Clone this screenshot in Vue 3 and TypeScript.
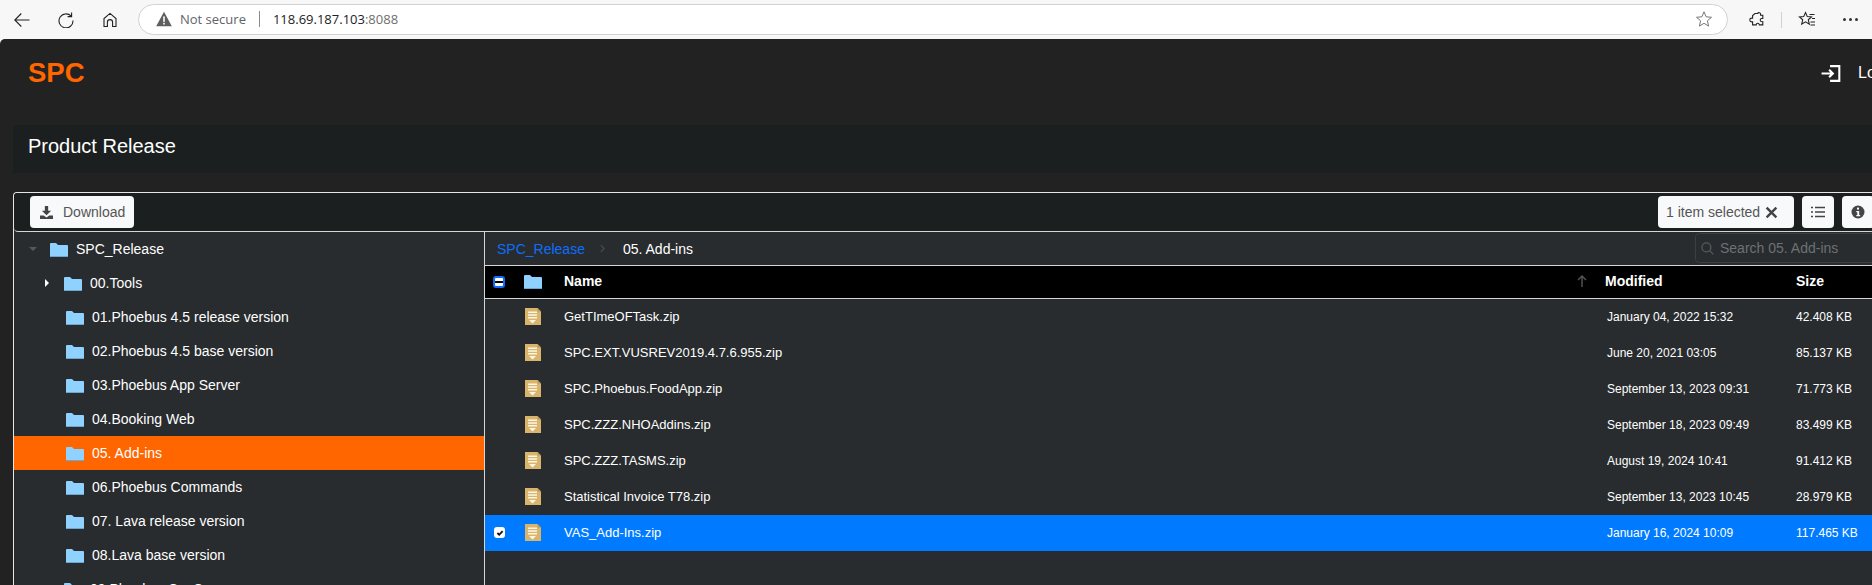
<script setup lang="ts">
interface FileRow { name: string; modified: string; size: string; selected?: boolean }
interface FolderRow { name: string; kind: 'root' | 'closed' | 'leaf'; active?: boolean }

const folders: FolderRow[] = [
  { name: 'SPC_Release', kind: 'root' },
  { name: '00.Tools', kind: 'closed' },
  { name: '01.Phoebus 4.5 release version', kind: 'leaf' },
  { name: '02.Phoebus 4.5 base version', kind: 'leaf' },
  { name: '03.Phoebus App Server', kind: 'leaf' },
  { name: '04.Booking Web', kind: 'leaf' },
  { name: '05. Add-ins', kind: 'leaf', active: true },
  { name: '06.Phoebus Commands', kind: 'leaf' },
  { name: '07. Lava release version', kind: 'leaf' },
  { name: '08.Lava base version', kind: 'leaf' },
  { name: '09.Phoebus Svr Svc', kind: 'closed' },
]

const files: FileRow[] = [
  { name: 'GetTImeOFTask.zip', modified: 'January 04, 2022 15:32', size: '42.408 KB' },
  { name: 'SPC.EXT.VUSREV2019.4.7.6.955.zip', modified: 'June 20, 2021 03:05', size: '85.137 KB' },
  { name: 'SPC.Phoebus.FoodApp.zip', modified: 'September 13, 2023 09:31', size: '71.773 KB' },
  { name: 'SPC.ZZZ.NHOAddins.zip', modified: 'September 18, 2023 09:49', size: '83.499 KB' },
  { name: 'SPC.ZZZ.TASMS.zip', modified: 'August 19, 2024 10:41', size: '91.412 KB' },
  { name: 'Statistical Invoice T78.zip', modified: 'September 13, 2023 10:45', size: '28.979 KB' },
  { name: 'VAS_Add-Ins.zip', modified: 'January 16, 2024 10:09', size: '117.465 KB', selected: true },
]
</script>

<template>
  <div class="screen">
    <div class="chrome">
      <svg class="nav back" viewBox="0 0 16 16"><path d="M15.5 8H.8M7.3 1.5.8 8l6.5 6.5" /></svg>
      <svg class="nav reload" viewBox="0 0 16 16"><path d="M13.2 4.2A7 7 0 1 0 15 8.5M13.6.6v4H9.6" /></svg>
      <svg class="nav home" viewBox="0 0 16 16"><path d="M2 14.5V6.6L8 1.4l6 5.2v7.9h-3.4V10.2a2.6 2.6 0 0 0-5.2 0v4.3Z" /></svg>
      <div class="address">
        <svg class="warn" viewBox="0 0 16 16"><path d="M8 .8 15.8 15.2H.2Z" fill="#5f5f5f" /><rect x="7.2" y="5.4" width="1.6" height="5.4" fill="#fff" /><rect x="7.2" y="11.8" width="1.6" height="1.7" fill="#fff" /></svg>
        <span class="secure">Not secure</span>
        <span class="divider"></span>
        <span class="host">118.69.187.103</span><span class="port">:8088</span>
        <svg class="star" viewBox="0 0 16 16"><path d="m8 .8 2.1 5 5.4.5-4.1 3.5 1.2 5.3L8 12.3l-4.6 2.8 1.2-5.3L.5 6.3l5.4-.5Z" /></svg>
      </div>
      <svg class="tool puzzle" viewBox="0 0 16 16"><path d="M6 1.5h2.6a1.6 1.6 0 0 1 3 .9v.9h2.2v3.2h-1a1.6 1.6 0 0 0 0 3.2h1v3.2h-3.4a1.6 1.6 0 0 0-3.2 0H3.6v-3h-.9a1.9 1.9 0 0 1 0-3.8h.9V3.6Z" /></svg>
      <span class="tool-divider"></span>
      <svg class="tool favs" viewBox="0 0 18 18"><path d="M7.5 1.5 9.3 5.6l4.2.4-3.2 2.8 1 4.3-3.8-2.3-3.8 2.3 1-4.3L1.5 6l4.2-.4ZM11.5 3.5h5M14 7.5h3M12.5 11h4.5M12.5 14h4.5" /></svg>
      <span class="more"><i></i><i></i><i></i></span>
    </div>

    <div class="page">
      <header class="brand-bar">
        <span class="brand">SPC</span>
        <span class="login">
          <svg class="login-icon" viewBox="0 0 20 18"><path d="M0 9h12M8 5l4 4-4 4M9 1.2h9.8v15.6H9" /></svg>
          Logout
        </span>
      </header>

      <div class="title-bar">Product Release</div>

      <section class="manager">
        <div class="toolbar">
          <button class="btn download">
            <svg class="btn-icon" viewBox="0 0 14 14"><path d="M5.2 0h3.6v5.2H12L7 10 2 5.2h3.2Z" /><path d="M0 10.2h4l3 2.3 3-2.3h4V14H0Z" /></svg>
            Download
          </button>
          <div class="toolbar-right">
            <button class="btn selected-count">
              1 item selected
              <svg class="close" viewBox="0 0 12 12"><path d="M1.5 1.5l9 9M10.5 1.5l-9 9" /></svg>
            </button>
            <button class="btn square">
              <svg class="list" viewBox="0 0 14 12"><path d="M4 1.5h10M4 6h10M4 10.5h10M0 1.5h2M0 6h2M0 10.5h2" /></svg>
            </button>
            <button class="btn square">
              <svg class="info" viewBox="0 0 14 14"><circle cx="7" cy="7" r="6.5" fill="#444" /><rect x="6" y="2.6" width="2" height="2" fill="#f8f9fa" /><path d="M5.3 6h2.9v4h1v1.3H5.3V10h1V7.2h-1Z" fill="#f8f9fa" /></svg>
            </button>
          </div>
        </div>

        <div class="body">
          <aside class="tree">
            <div
              v-for="f in folders"
              :key="f.name"
              class="tree-row"
              :class="[f.kind, { active: f.active }]"
            >
              <span class="caret" aria-hidden="true"></span>
              <svg class="folder" viewBox="0 0 18 14"><path d="M0 1a1 1 0 0 1 1-1h5l2 2h9a1 1 0 0 1 1 1v10a1 1 0 0 1-1 1H1a1 1 0 0 1-1-1Z" fill="#90d2ff" /><path d="M0 13h18v1H0Z" fill="#6ea6cf" /></svg>
              <span class="tree-label">{{ f.name }}</span>
            </div>
          </aside>

          <main class="pane">
            <div class="crumbs">
              <span class="crumb-link">SPC_Release</span>
              <svg class="crumb-sep" viewBox="0 0 6 10"><path d="m1 1 4 4-4 4" /></svg>
              <span class="crumb-current">05. Add-ins</span>
              <div class="search">
                <svg class="search-icon" viewBox="0 0 14 14"><circle cx="5.8" cy="5.8" r="4.8" /><path d="m9.3 9.3 4 4" /></svg>
                <span class="search-text">Search 05. Add-ins</span>
              </div>
            </div>

            <div class="grid-row head">
              <span class="check minus"><i></i></span>
              <svg class="folder" viewBox="0 0 18 14"><path d="M0 1a1 1 0 0 1 1-1h5l2 2h9a1 1 0 0 1 1 1v10a1 1 0 0 1-1 1H1a1 1 0 0 1-1-1Z" fill="#90d2ff" /><path d="M0 13h18v1H0Z" fill="#6ea6cf" /></svg>
              <span class="col-name head-text">
                Name
                <svg class="sort" viewBox="0 0 10 12"><path d="M5 12V1M1 5l4-4 4 4" /></svg>
              </span>
              <span class="head-text">Modified</span>
              <span class="head-text">Size</span>
            </div>

            <div
              v-for="file in files"
              :key="file.name"
              class="grid-row file"
              :class="{ selected: file.selected }"
            >
              <span v-if="file.selected" class="check on">
                <svg viewBox="0 0 10 10"><path d="m2.4 5 1.8 1.8L7.6 3.2" /></svg>
              </span>
              <span v-else></span>
              <svg class="zip" viewBox="0 0 16 17">
                <path d="M0 0h12.5L16 3.5V17H0Z" fill="#d9b46c" />
                <path d="M12.5 0 16 3.5h-3.5Z" fill="#b9975a" />
                <path d="M3 3.4h9v1.5H3ZM3 6.2h9v1.5H3ZM3 9h9v1.5H3Z" fill="#fdf6e3" />
                <path d="M4 12h7l-3.5 3.6Z" fill="#fdf6e3" />
              </svg>
              <span class="col-name file-name">{{ file.name }}</span>
              <span class="file-date">{{ file.modified }}</span>
              <span class="file-size">{{ file.size }}</span>
            </div>
          </main>
        </div>
      </section>
    </div>
  </div>
</template>

<style>
html, body { margin: 0; background: #f7f7f7; overflow: hidden; }
</style>

<style scoped>
.screen {
  width: 1872px;
  height: 585px;
  overflow: hidden;
  font-family: "Liberation Sans", Arial, sans-serif;
  background: #f7f7f7;
}
.chrome {
  height: 39px;
  display: flex;
  align-items: center;
  box-sizing: border-box;
  padding: 0 0 0 14px;
  color: #222;
}
.nav { width: 16px; height: 16px; fill: none; stroke: #222; stroke-width: 1.1; flex: none; }
.reload { margin-left: 28px; }
.home { margin-left: 28px; }
.address {
  margin-left: 20px;
  margin-top: -1px;
  flex: none;
  width: 1590px;
  height: 31px;
  box-sizing: border-box;
  border: 1px solid #d2d2d2;
  border-radius: 16px;
  background: #fff;
  display: flex;
  align-items: center;
  padding-left: 17px;
  font-size: 13px;
  font-family: "Open Sans", "Liberation Sans", sans-serif;
}
.warn { width: 16px; height: 16px; flex: none; }
.secure { margin-left: 8px; color: #5f6368; }
.divider { width: 1px; height: 16px; background: #8a8a8a; margin: 0 13px; }
.host { color: #222; }
.port { color: #6f6f6f; }
.star { width: 16px; height: 16px; margin-left: auto; margin-right: 15px; fill: #fff; stroke: #777; stroke-width: 1; flex: none; }
.tool { fill: none; stroke: #222; stroke-width: 1.1; flex: none; }
.puzzle { width: 16px; height: 16px; margin-left: 21px; }
.tool-divider { width: 1px; height: 16px; background: #d0d0d0; margin: 0 16px; }
.favs { width: 18px; height: 18px; }
.more { display: flex; gap: 3px; margin-left: 27px; }
.more i { width: 3px; height: 3px; background: #333; border-radius: 50%; }

.page {
  height: 546px;
  background: #222;
  border-top-left-radius: 5px;
  overflow: hidden;
  color: #fff;
}
.brand-bar {
  height: 86px;
  display: flex;
  align-items: center;
  justify-content: space-between;
  padding: 0 0 18px 28px;
  box-sizing: border-box;
  width: 1930px;
}
.brand { color: #f60; font-weight: 700; font-size: 27.5px; }
.login { display: flex; align-items: center; gap: 17px; font-size: 16px; width: 109px; flex: none; }
.login-icon { width: 20px; height: 17px; fill: none; stroke: #fff; stroke-width: 2.2; flex: none; }
.title-bar {
  margin-left: 13px;
  height: 48px;
  width: 1900px;
  box-sizing: border-box;
  background: #1c1f20;
  display: flex;
  align-items: center;
  padding: 0 0 6px 15px;
  font-size: 20px;
}

.manager {
  margin: 19px 0 0 13px;
  width: 1875px;
  box-sizing: border-box;
  border: 1px solid #e6e6e6;
  border-bottom: 0;
  border-radius: 4px 0 0 0;
}
.toolbar {
  height: 39px;
  box-sizing: border-box;
  border-bottom: 1px solid #d6d6d6;
  background: #1c1f20;
  border-radius: 4px 0 0 4px;
  display: flex;
  align-items: flex-start;
  justify-content: space-between;
  padding: 3px 13px 0 16px;
}
.toolbar-right { display: flex; gap: 8px; }
.btn {
  height: 32px;
  box-sizing: border-box;
  border: 0;
  border-radius: 4px;
  background: #f8f9fa;
  color: #555;
  font: 14px "Liberation Sans", Arial, sans-serif;
  display: flex;
  align-items: center;
  padding: 0 8px 0 10px;
}
.download { width: 104px; }
.btn-icon { width: 13px; height: 13px; fill: #444; margin-right: 10px; flex: none; }
.selected-count { width: 136px; padding: 0 7px 0 8px; justify-content: space-between; }
.close { width: 13px; height: 13px; fill: none; stroke: #444; stroke-width: 2.2; flex: none; margin-right: 9px; }
.square { width: 32px; padding: 0; justify-content: center; }
.list { width: 14px; height: 12px; fill: none; stroke: #444; stroke-width: 1.7; }
.info { width: 14px; height: 14px; }

.body { display: flex; background: #282c2e; height: 360px; }
.tree {
  width: 470px;
  flex: none;
  border-right: 1px solid #d6d6d6;
  font-size: 14px;
}
.tree-row {
  height: 34px;
  display: flex;
  align-items: center;
  position: relative;
}
.tree-row.active { background: #f60; }
.folder { width: 18px; height: 14px; flex: none; }
.tree-row .folder { margin-top: 2px; }
.caret { width: 0; height: 0; flex: none; }
.tree-row.root { padding-left: 36px; }
.tree-row.root .caret {
  position: absolute;
  left: 15px;
  top: 15px;
  border-left: 4px solid transparent;
  border-right: 4px solid transparent;
  border-top: 4px solid #53585a;
}
.tree-row.closed { padding-left: 50px; }
.tree-row.closed .caret {
  position: absolute;
  left: 31px;
  top: 13px;
  border-top: 4px solid transparent;
  border-bottom: 4px solid transparent;
  border-left: 4px solid #fff;
}
.tree-row.leaf { padding-left: 52px; }
.tree-label { margin-left: 8px; white-space: nowrap; }

.pane { flex: 1; min-width: 0; }
.crumbs {
  height: 33px;
  box-sizing: border-box;
  display: flex;
  align-items: center;
  padding-left: 12px;
  font-size: 14px;
}
.crumb-link { color: #0d6efd; }
.crumb-sep { width: 5px; height: 9px; margin: 0 18px 0 15px; fill: none; stroke: #4a4e50; stroke-width: 1.3; flex: none; }
.search {
  margin-left: auto;
  align-self: flex-start;
  margin-top: 1px;
  width: 192px;
  height: 30px;
  box-sizing: border-box;
  border: 1px solid #3a3f42;
  border-radius: 4px;
  display: flex;
  align-items: center;
  padding-left: 5px;
  gap: 6px;
  color: #6c7175;
  font-size: 14px;
}
.search-icon { width: 13px; height: 13px; fill: none; stroke: #555a5d; stroke-width: 1.4; flex: none; }

.grid-row {
  display: grid;
  grid-template-columns: 39px 40px 1fr 191px 91px;
  align-items: center;
  box-sizing: border-box;
  font-size: 13px;
}
.head {
  height: 34px;
  background: #000;
  border-top: 1px solid #d6d6d6;
  border-bottom: 1px solid #d6d6d6;
  font-weight: 700;
  font-size: 14px;
}
.head-text { padding-bottom: 2px; }
.file { height: 36px; padding-bottom: 1px; }
.file.selected { background: #007bff; }
.col-name { display: flex; align-items: center; justify-content: space-between; padding-right: 18px; white-space: nowrap; }
.sort { width: 10px; height: 12px; fill: none; stroke: #4d5154; stroke-width: 1.5; flex: none; }
.file-name { font-size: 13px; }
.file-date { font-size: 12px; padding-left: 2px; white-space: nowrap; }
.file-size { font-size: 12px; white-space: nowrap; }
.check {
  width: 12px;
  height: 12px;
  border-radius: 3px;
  margin-left: 8px;
  display: flex;
  align-items: center;
  justify-content: center;
  box-sizing: border-box;
}
.check.minus { background: #fff; border: 2px solid #0d6efd; }
.check.minus i { width: 8px; height: 2px; background: #000; }
.check.on { background: #fff; width: 11px; height: 11px; margin-left: 9px; }
.check.on svg { width: 10px; height: 10px; fill: none; stroke: #111; stroke-width: 1.8; }
.zip { width: 16px; height: 17px; margin-left: 1px; }
</style>
